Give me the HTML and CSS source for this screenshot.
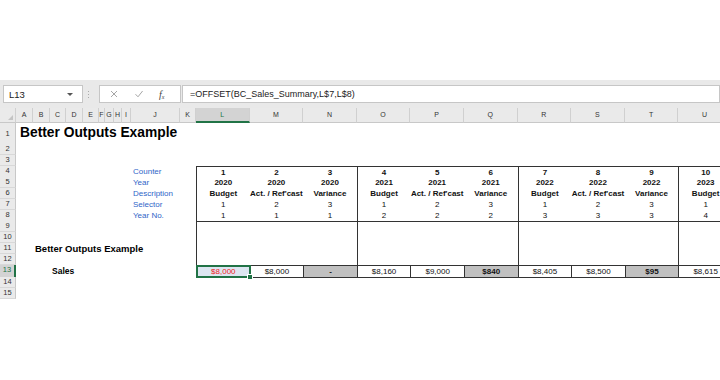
FILE: index.html
```html
<!DOCTYPE html>
<html lang="en">
<head>
    <meta charset="UTF-8">
    <title>Better Outputs Example</title>
    <link rel="stylesheet" href="styles.css">
</head>
<body>
    <div class="excel">
        <!-- Formula bar -->
        <div class="formula-bar">
            <div class="name-box"><span>L13</span><span class="caret"></span></div>
            <div class="grip"><i></i><i></i><i></i></div>
            <div class="fx-buttons">
                <svg viewBox="0 0 8 8"><path d="M1 1L7 7M7 1L1 7" stroke="#a6a6a6" stroke-width="1"/></svg>
                <svg viewBox="0 0 8 8"><path d="M0.5 4.2L3 6.8L7.6 1" stroke="#a6a6a6" stroke-width="1" fill="none"/></svg>
                <span class="fx">f<sub>x</sub></span>
            </div>
            <div class="formula">=OFFSET(BC_Sales_Summary,L$7,L$8)</div>
        </div>

        <!-- Sheet -->
        <div class="sheet">
            <div class="row head">
                <div class="corner"></div>
                <div>A</div><div>B</div><div>C</div><div>D</div><div>E</div><div>F</div>
                <div>G</div><div>H</div><div>I</div><div>J</div><div>K</div>
                <div class="sel">L</div><div>M</div><div>N</div><div>O</div><div>P</div>
                <div>Q</div><div>R</div><div>S</div><div>T</div><div>U</div>
            </div>

            <div class="row r1">
                <div class="rh">1</div>
                <div class="title">Better Outputs Example</div>
            </div>
            <div class="row"><div class="rh">2</div></div>
            <div class="row"><div class="rh">3</div></div>

            <div class="row top bold">
                <div class="rh">4</div>
                <div class="lbl">Counter</div>
                <div class="c g">1</div><div class="c">2</div><div class="c">3</div>
                <div class="c g">4</div><div class="c">5</div><div class="c">6</div>
                <div class="c g">7</div><div class="c">8</div><div class="c">9</div>
                <div class="c g">10</div>
            </div>
            <div class="row bold">
                <div class="rh">5</div>
                <div class="lbl">Year</div>
                <div class="c g">2020</div><div class="c">2020</div><div class="c">2020</div>
                <div class="c g">2021</div><div class="c">2021</div><div class="c">2021</div>
                <div class="c g">2022</div><div class="c">2022</div><div class="c">2022</div>
                <div class="c g">2023</div>
            </div>
            <div class="row bold">
                <div class="rh">6</div>
                <div class="lbl">Description</div>
                <div class="c g">Budget</div><div class="c">Act. / Ref'cast</div><div class="c">Variance</div>
                <div class="c g">Budget</div><div class="c">Act. / Ref'cast</div><div class="c">Variance</div>
                <div class="c g">Budget</div><div class="c">Act. / Ref'cast</div><div class="c">Variance</div>
                <div class="c g">Budget</div>
            </div>
            <div class="row">
                <div class="rh">7</div>
                <div class="lbl">Selector</div>
                <div class="c g">1</div><div class="c">2</div><div class="c">3</div>
                <div class="c g">1</div><div class="c">2</div><div class="c">3</div>
                <div class="c g">1</div><div class="c">2</div><div class="c">3</div>
                <div class="c g">1</div>
            </div>
            <div class="row bot">
                <div class="rh">8</div>
                <div class="lbl">Year No.</div>
                <div class="c g">1</div><div class="c">1</div><div class="c">1</div>
                <div class="c g">2</div><div class="c">2</div><div class="c">2</div>
                <div class="c g">3</div><div class="c">3</div><div class="c">3</div>
                <div class="c g">4</div>
            </div>

            <div class="row">
                <div class="rh">9</div>
                <div class="c g first"></div><div class="c"></div><div class="c"></div>
                <div class="c g"></div><div class="c"></div><div class="c"></div>
                <div class="c g"></div><div class="c"></div><div class="c"></div>
                <div class="c g"></div>
            </div>
            <div class="row">
                <div class="rh">10</div>
                <div class="c g first"></div><div class="c"></div><div class="c"></div>
                <div class="c g"></div><div class="c"></div><div class="c"></div>
                <div class="c g"></div><div class="c"></div><div class="c"></div>
                <div class="c g"></div>
            </div>
            <div class="row">
                <div class="rh">11</div>
                <div class="subtitle">Better Outputs Example</div>
                <div class="c g"></div><div class="c"></div><div class="c"></div>
                <div class="c g"></div><div class="c"></div><div class="c"></div>
                <div class="c g"></div><div class="c"></div><div class="c"></div>
                <div class="c g"></div>
            </div>
            <div class="row">
                <div class="rh">12</div>
                <div class="c g first"></div><div class="c"></div><div class="c"></div>
                <div class="c g"></div><div class="c"></div><div class="c"></div>
                <div class="c g"></div><div class="c"></div><div class="c"></div>
                <div class="c g"></div>
            </div>

            <div class="row tot">
                <div class="rh sel">13</div>
                <div class="sales">Sales</div>
                <div class="c active">$8,000</div><div class="c">$8,000</div><div class="c var">-</div>
                <div class="c">$8,160</div><div class="c">$9,000</div><div class="c var">$840</div>
                <div class="c">$8,405</div><div class="c">$8,500</div><div class="c var">$95</div>
                <div class="c">$8,615</div>
            </div>
            <div class="row"><div class="rh">14</div></div>
            <div class="row"><div class="rh">15</div></div>
        </div>
    </div>
</body>
</html>
```

FILE: styles.css
```css
body {
    margin: 0;
    background-color: #fff;
    font-family: "Liberation Sans", Arial, sans-serif;
    color: #111;
}

.excel {
    margin-top: 80px;
    width: 720px;
    overflow: hidden;
}

/* Formula bar */
.formula-bar {
    height: 28px;
    background-color: #e9e9e9;
    display: flex;
    align-items: center;
    padding-left: 3px;
    box-sizing: border-box;
}

.name-box {
    width: 80px;
    height: 18px;
    background-color: #fff;
    border: 1px solid #c6c6c6;
    box-sizing: border-box;
    display: flex;
    align-items: center;
    justify-content: space-between;
    padding: 0 9px 0 5px;
    font-size: 9.5px;
    color: #222;
}

.caret {
    width: 0;
    height: 0;
    border-left: 3px solid transparent;
    border-right: 3px solid transparent;
    border-top: 3px solid #555;
}

.grip {
    width: 16px;
    display: flex;
    flex-direction: column;
    align-items: center;
    gap: 2px;
    padding-right: 6px;
    box-sizing: border-box;
}

.grip i {
    width: 1px;
    height: 1px;
    background-color: #aaa;
}

.fx-buttons {
    width: 82px;
    height: 18px;
    background-color: #fff;
    border: 1px solid #c6c6c6;
    box-sizing: border-box;
    display: flex;
    align-items: center;
    padding-left: 10px;
    gap: 17px;
}

.fx-buttons svg {
    width: 8px;
    height: 8px;
}

.fx {
    font-family: "Liberation Serif", serif;
    font-style: italic;
    font-size: 10px;
    color: #444;
    margin-left: -1px;
}

.fx sub {
    font-size: 6px;
    vertical-align: -1px;
}

.formula {
    flex: 1;
    height: 18px;
    background-color: #fff;
    border: 1px solid #c6c6c6;
    box-sizing: border-box;
    margin-left: 1px;
    padding-left: 7px;
    font-size: 9px;
    color: #222;
    display: flex;
    align-items: center;
}

/* Sheet grid */
.row {
    display: grid;
    grid-template-columns: 16px 17px 17px 16px 17px 16px 6px 9px 8px 9px 49px 16px repeat(10, 53.6px);
    height: 11px;
    font-size: 8px;
    line-height: 11px;
}

.rh {
    grid-column: 1;
    background-color: #eaeaea;
    border-right: 1px solid #c8c8c8;
    border-bottom: 1px solid #d8d8d8;
    box-sizing: border-box;
    font-size: 7.5px;
    line-height: 10px;
    color: #333;
    text-align: center;
}

.rh.sel {
    background-color: #d3d3d3;
    color: #217346;
    border-right: 2px solid #217346;
}

.head {
    height: 14px;
    background-color: #eaeaea;
}

.head div {
    border-right: 1px solid #d0d0d0;
    border-bottom: 1px solid #c8c8c8;
    box-sizing: border-box;
    font-size: 7px;
    line-height: 13px;
    text-align: center;
    color: #333;
}

.head .sel {
    background-color: #d3d3d3;
    color: #217346;
    border-bottom: 2px solid #217346;
}

.head .corner {
    position: relative;
}

.head .corner::after {
    content: "";
    position: absolute;
    right: 2px;
    bottom: 2px;
    border-left: 5px solid transparent;
    border-bottom: 5px solid #c4c4c4;
}

.r1 {
    height: 22px;
}

.r1 .rh {
    line-height: 24px;
}

.title {
    grid-column: 2 / -1;
    padding-left: 4px;
    font-size: 13.8px;
    font-weight: bold;
    line-height: 22px;
    color: #000;
    white-space: nowrap;
}

.lbl {
    grid-column: 11 / 13;
    padding-left: 2px;
    color: #2f65c8;
    font-weight: normal;
}

.subtitle {
    grid-column: 3 / 13;
    padding-left: 2px;
    font-size: 9.5px;
    font-weight: bold;
    color: #000;
}

.sales {
    grid-column: 4 / 13;
    padding-left: 2px;
    font-size: 8.5px;
    font-weight: bold;
    line-height: 12px;
    color: #000;
}

/* Data cells */
.c {
    display: flex;
    align-items: center;
    justify-content: center;
    box-sizing: border-box;
    white-space: nowrap;
}

.c.first {
    grid-column-start: 13;
}

.bold .c {
    font-weight: bold;
}

.g {
    border-left: 1px solid #333;
}

.top .c {
    border-top: 1px solid #333;
}

.bot .c {
    border-bottom: 1px solid #333;
}

.tot {
    height: 12px;
}

.tot .c {
    border-top: 1px solid #333;
    border-bottom: 1px solid #333;
    border-left: 1px solid #333;
}

.tot .var {
    background-color: #c0c0c0;
    font-weight: bold;
}

.tot .active {
    position: relative;
    background-color: #dce6f1;
    color: #f01c24;
}

.tot .active::after {
    content: "";
    position: absolute;
    top: -1px;
    left: -1px;
    right: -1px;
    bottom: -1px;
    border: 2px solid #217346;
}

.tot .active::before {
    content: "";
    position: absolute;
    right: -3px;
    bottom: -3px;
    width: 4px;
    height: 4px;
    background-color: #217346;
    border: 1px solid #fff;
    z-index: 1;
}
```
